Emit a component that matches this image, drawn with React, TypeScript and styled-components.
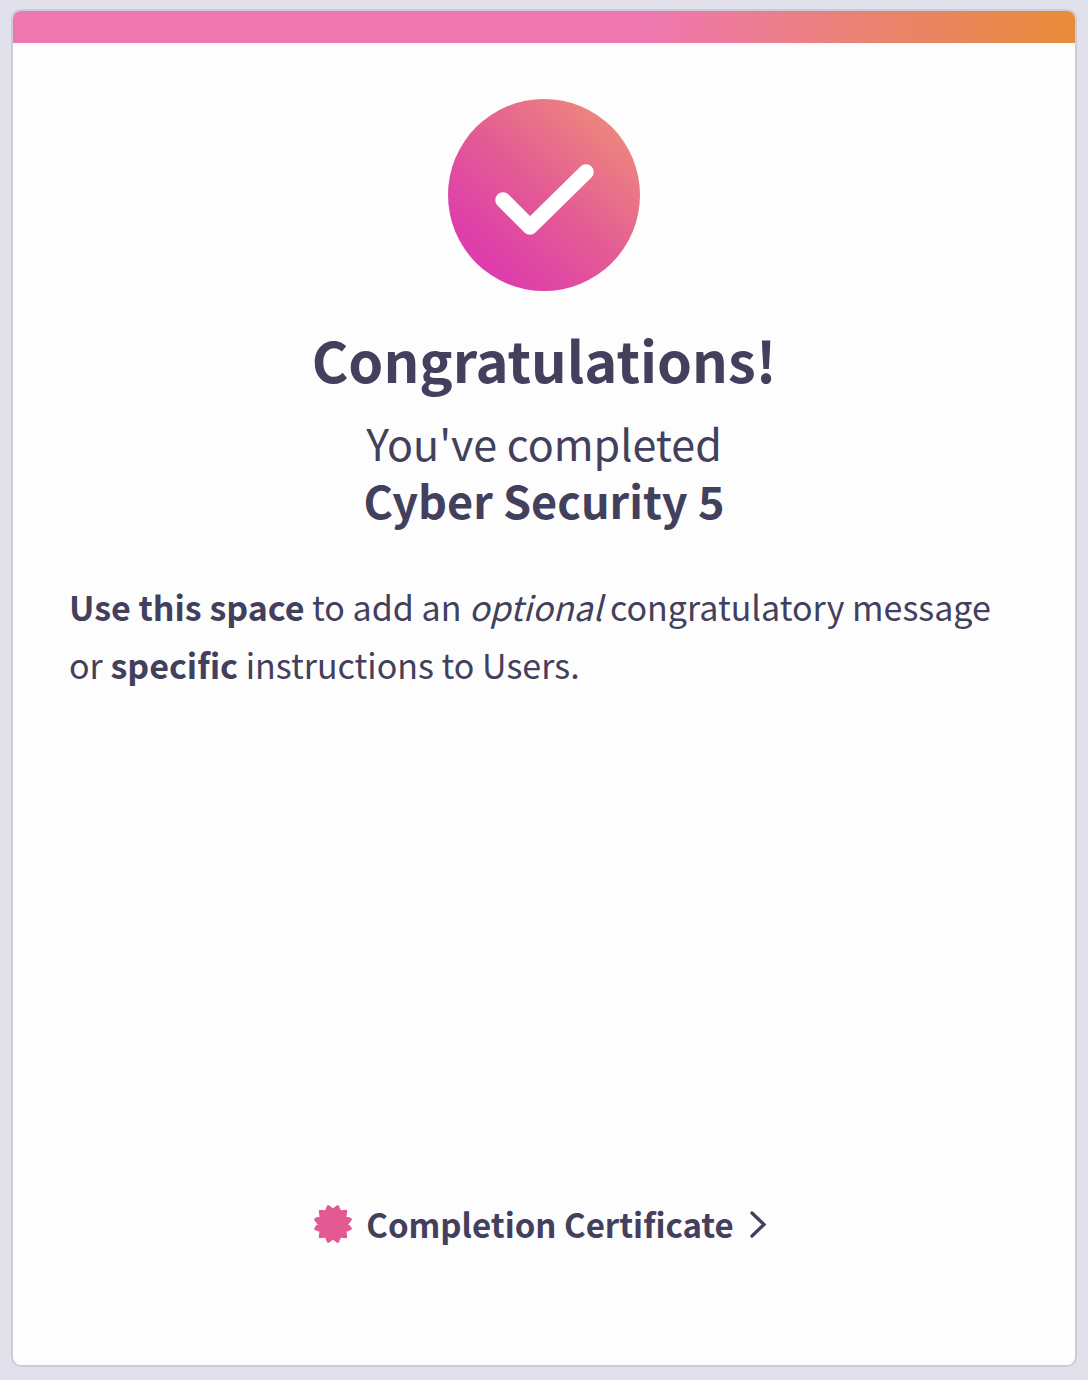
import React from "react";
import styled, { createGlobalStyle } from "styled-components";

const GlobalStyle = createGlobalStyle`
  *, *::before, *::after { box-sizing: border-box; }
  body {
    margin: 0;
    background: #e1e1eb;
    color: #42405c;
    font-family: "Noto Sans CJK SC", "Source Sans 3", sans-serif;
  }
`;

const Page = styled.div`
  display: flex;
  min-height: 100vh;
  padding: 9px 11px 13px;
`;

const Card = styled.main`
  display: flex;
  flex: 1;
  flex-direction: column;
  min-width: 0;
  overflow: hidden;
  border: 2px solid #cbcbda;
  border-radius: 10px;
  background: #fdfdfd;
`;

const ProgressBar = styled.div`
  height: 32px;
  flex: none;
  background: linear-gradient(90deg, #ee77b0 0%, #ee77b0 60%, #e98b38 100%);
`;

const Content = styled.div`
  display: flex;
  flex: 1;
  flex-direction: column;
  align-items: center;
  padding: 56px 56px 112px;
`;

const SuccessIcon = styled.svg`
  display: block;
  width: 192px;
  height: 192px;
`;

const Title = styled.h1`
  margin: 32px 0 18px;
  font-size: 56px;
  font-weight: 700;
  line-height: 72px;
  text-align: center;
`;

const Summary = styled.p`
  margin: 0;
  font-size: 43px;
  line-height: 58px;
  text-align: center;
`;

const CourseName = styled.strong`
  display: block;
  font-size: 45px;
  font-weight: 700;
`;

const Message = styled.p`
  align-self: stretch;
  margin: 49px 0;
  font-size: 34px;
  line-height: 58px;
`;

const CertificateLink = styled.a`
  display: flex;
  align-items: center;
  gap: 13px;
  margin-top: auto;
  color: inherit;
  font-size: 33px;
  font-weight: 700;
  line-height: 58px;
  text-decoration: none;
`;

const BadgeIcon = styled.svg`
  flex: none;
  width: 40px;
  height: 40px;
`;

const ChevronIcon = styled.svg`
  flex: none;
  width: 28px;
  height: 32px;
`;

const badgePoints = Array.from({ length: 24 }, (_, i) => {
  const radius = i % 2 === 0 ? 18 : 13.8;
  const angle = ((i * 15 + 15) * Math.PI) / 180;
  return `${(20 + radius * Math.cos(angle)).toFixed(2)},${(20 + radius * Math.sin(angle)).toFixed(2)}`;
}).join(" ");

export default function App() {
  return (
    <>
      <GlobalStyle />
      <Page>
        <Card>
          <ProgressBar />
          <Content>
            <SuccessIcon viewBox="0 0 192 192" aria-hidden="true">
              <defs>
                <linearGradient id="success" x1="0.2" y1="0.84" x2="0.88" y2="0.1">
                  <stop offset="0" stopColor="#de3dab" />
                  <stop offset="0.45" stopColor="#e35b95" />
                  <stop offset="1" stopColor="#ee897b" />
                </linearGradient>
              </defs>
              <circle cx="96" cy="96" r="96" fill="url(#success)" />
              <path
                d="M55 101 82 128 138 73"
                fill="none"
                stroke="#fff"
                strokeWidth="15.5"
                strokeLinecap="round"
                strokeLinejoin="round"
              />
            </SuccessIcon>
            <Title>Congratulations!</Title>
            <Summary>
              You've completed
              <CourseName>Cyber Security 5</CourseName>
            </Summary>
            <Message>
              <b>Use this space</b> to add an <em>optional</em> congratulatory message or{" "}
              <b>specific</b> instructions to Users.
            </Message>
            <CertificateLink href="#certificate">
              <BadgeIcon viewBox="0 0 40 40" aria-hidden="true">
                <polygon
                  points={badgePoints}
                  fill="#e35a93"
                  stroke="#e35a93"
                  strokeWidth="3"
                  strokeLinejoin="round"
                />
              </BadgeIcon>
              Completion Certificate
              <ChevronIcon viewBox="0 0 28 32" aria-hidden="true">
                <path
                  d="M5 5 17 16.5 5 28"
                  fill="none"
                  stroke="#42405c"
                  strokeWidth="3.3"
                  strokeLinecap="round"
                />
              </ChevronIcon>
            </CertificateLink>
          </Content>
        </Card>
      </Page>
    </>
  );
}
